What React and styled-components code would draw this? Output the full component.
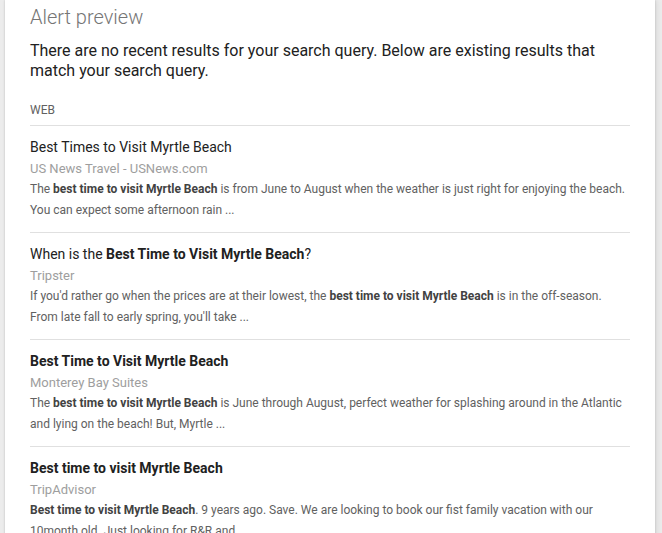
import React from 'react';
import styled, { createGlobalStyle } from 'styled-components';

const GlobalStyle = createGlobalStyle`
  html, body {
    margin: 0;
    padding: 0;
    background: #ececec;
    font-family: Roboto, "Liberation Sans", Arial, sans-serif;
  }
`;

const Page = styled.div`
  height: 533px;
  overflow: hidden;
  padding-left: 5px;
`;

const Card = styled.div`
  width: 650px;
  min-height: 533px;
  background: #fff;
  box-shadow: 0 0 2px rgba(0, 0, 0, 0.18), 2px 0 6px rgba(0, 0, 0, 0.08);
  padding: 4px 25px 0 25px;
  box-sizing: border-box;
`;

const Title = styled.h2`
  margin: 0;
  font-size: 20px;
  font-weight: 300;
  color: #757575;
  line-height: 26px;
`;

const Notice = styled.p`
  margin: 11px 0 0;
  font-size: 16px;
  line-height: 20px;
  color: #212121;
`;

const Section = styled.div`
  margin-top: 20px;
  font-size: 12px;
  line-height: 18px;
  color: #616161;
  padding-bottom: 6px;
  border-bottom: 1px solid #e0e0e0;
`;

const Result = styled.div`
  padding: 11px 0 11px;
  border-bottom: 1px solid #e0e0e0;
`;

const ResultTitle = styled.div`
  font-size: 14px;
  line-height: 21px;
  color: #212121;
  b {
    font-weight: 700;
  }
`;

const Source = styled.div`
  font-size: 13px;
  line-height: 21px;
  color: #9e9e9e;
`;

const Snippet = styled.div`
  font-size: 12px;
  line-height: 21px;
  color: #616161;
  b {
    color: #424242;
    font-weight: 700;
  }
`;

const results = [
  {
    title: <>Best Times to Visit Myrtle Beach</>,
    source: 'US News Travel - USNews.com',
    snippet: (
      <>
        The <b>best time to visit Myrtle Beach</b> is from June to August when the weather is just right for enjoying the beach. You can expect some afternoon rain ...
      </>
    ),
  },
  {
    title: (
      <>
        When is the <b>Best Time to Visit Myrtle Beach</b>?
      </>
    ),
    source: 'Tripster',
    snippet: (
      <>
        If you'd rather go when the prices are at their lowest, the <b>best time to visit Myrtle Beach</b> is in the off-season. From late fall to early spring, you'll take ...
      </>
    ),
  },
  {
    title: <b>Best Time to Visit Myrtle Beach</b>,
    source: 'Monterey Bay Suites',
    snippet: (
      <>
        The <b>best time to visit Myrtle Beach</b> is June through August, perfect weather for splashing around in the Atlantic and lying on the beach! But, Myrtle ...
      </>
    ),
  },
  {
    title: <b>Best time to visit Myrtle Beach</b>,
    source: 'TripAdvisor',
    snippet: (
      <>
        <b>Best time to visit Myrtle Beach</b>. 9 years ago. Save. We are looking to book our fist family vacation with our 10month old. Just looking for R&amp;R and ...
      </>
    ),
  },
];

export default function App() {
  return (
    <>
      <GlobalStyle />
      <Page>
        <Card>
          <Title>Alert preview</Title>
          <Notice>
            There are no recent results for your search query. Below are existing results that match your search query.
          </Notice>
          <Section>WEB</Section>
          {results.map((r, i) => (
            <Result key={i}>
              <ResultTitle>{r.title}</ResultTitle>
              <Source>{r.source}</Source>
              <Snippet>{r.snippet}</Snippet>
            </Result>
          ))}
        </Card>
      </Page>
    </>
  );
}
